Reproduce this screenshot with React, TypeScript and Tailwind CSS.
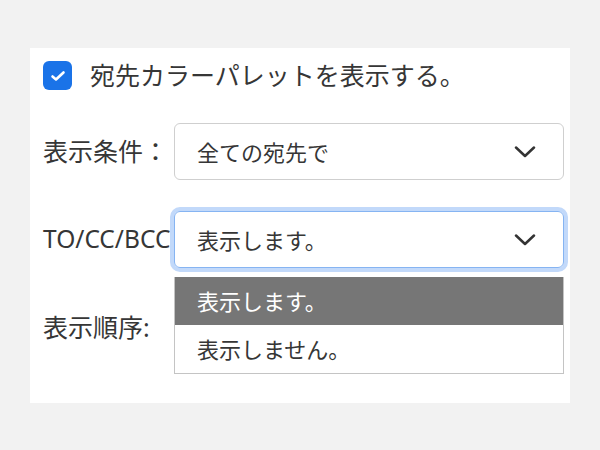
import React from 'react';

const Chevron = () => (
  <svg width="22" height="12" viewBox="0 0 22 12" className="shrink-0">
    <polyline points="2,1.5 11,10 20,1.5" fill="none" stroke="#333" strokeWidth="2.5" strokeLinecap="round" strokeLinejoin="round" />
  </svg>
);

const font = { fontFamily: '"Noto Sans", "Noto Sans CJK JP", sans-serif' };

const App: React.FC = () => {
  return (
    <div className="w-[600px] h-[450px] bg-[#f2f2f2] pt-[48px] pl-[30px]" style={font}>
      <div className="w-[540px] h-[355px] bg-white pl-[13px] pr-[6px] pt-[13px] text-[#363636]">
        <div className="flex items-center h-[29px] gap-[18px]">
          <div className="w-[29px] h-[29px] rounded-[6px] bg-[#1a73e8] flex items-center justify-center">
            <svg width="16" height="12" viewBox="0 0 16 12">
              <polyline points="2.5,6.5 6,9.5 13.5,2.5" fill="none" stroke="white" strokeWidth="2.6" strokeLinecap="round" strokeLinejoin="round" />
            </svg>
          </div>
          <span className="text-[25px] leading-none">宛先カラーパレットを表示する。</span>
        </div>

        <div className="mt-[33px] flex items-center">
          <span className="w-[131px] text-[25px] leading-none">表示条件：</span>
          <div className="flex-1 h-[57px] border border-[#cfcfcf] rounded-[6px] flex items-center justify-between pl-[22px] pr-[27px]">
            <span className="text-[22px] leading-none">全ての宛先で</span>
            <Chevron />
          </div>
        </div>

        <div className="mt-[31px] flex items-center">
          <span className="w-[131px] text-[24.5px] leading-none whitespace-nowrap">TO/CC/BCC</span>
          <div className="relative flex-1">
            <div className="h-[57px] border border-[#86b4f2] ring-[4px] ring-[#c2d9fa] rounded-[6px] flex items-center justify-between pl-[22px] pr-[27px]">
              <span className="text-[22px] leading-none">表示します。</span>
              <Chevron />
            </div>
            <div className="absolute left-0 right-0 top-[66px] z-10 border border-t-0 border-[#c4c4c4] bg-white">
              <div className="h-[48px] bg-[#767676] text-white flex items-center pl-[22px]">
                <span className="text-[22px] leading-none">表示します。</span>
              </div>
              <div className="h-[48px] bg-white flex items-center pl-[22px]">
                <span className="text-[22px] leading-none">表示しません。</span>
              </div>
            </div>
          </div>
        </div>

        <div className="mt-[31px] flex items-center">
          <span className="w-[131px] text-[25px] leading-none">表示順序:</span>
          <div className="flex-1 h-[57px] border border-[#cfcfcf] rounded-[6px]" />
        </div>
      </div>
    </div>
  );
};

export default App;
